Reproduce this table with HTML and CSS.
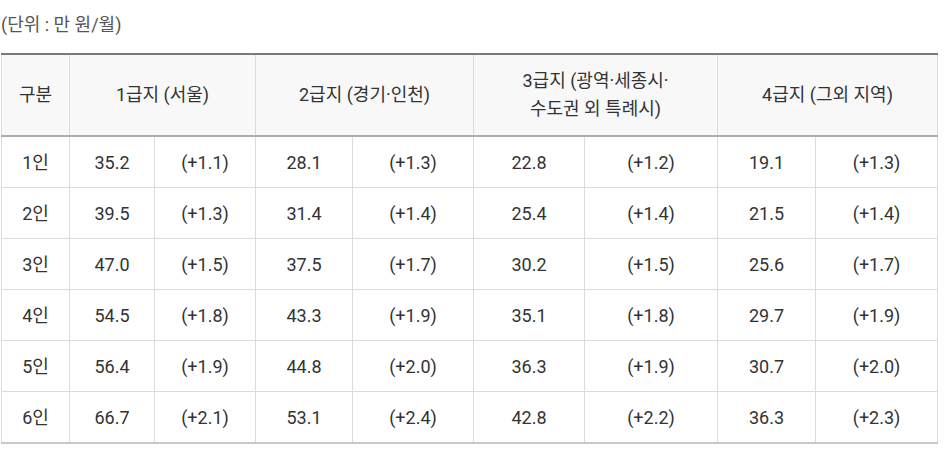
FILE: index.html
```html
<!DOCTYPE html>
<html lang="ko">
<head>
<meta charset="utf-8">
<link rel="stylesheet" href="styles.css">
</head>
<body>
<p class="unit">(단위 : 만 원/월)</p>
<table class="tbl">
  <colgroup>
    <col class="c0"><col class="c1"><col class="c2"><col class="c3"><col class="c4"><col class="c5"><col class="c6"><col class="c7"><col class="c8">
  </colgroup>
  <thead>
    <tr>
      <th>구분</th>
      <th colspan="2">1급지 (서울)</th>
      <th colspan="2">2급지 (경기·인천)</th>
      <th colspan="2">3급지 (광역·세종시·<br>수도권 외 특례시)</th>
      <th colspan="2">4급지 (그외 지역)</th>
    </tr>
  </thead>
  <tbody>
    <tr><td>1인</td><td>35.2</td><td>(+1.1)</td><td>28.1</td><td>(+1.3)</td><td>22.8</td><td>(+1.2)</td><td>19.1</td><td>(+1.3)</td></tr>
    <tr><td>2인</td><td>39.5</td><td>(+1.3)</td><td>31.4</td><td>(+1.4)</td><td>25.4</td><td>(+1.4)</td><td>21.5</td><td>(+1.4)</td></tr>
    <tr><td>3인</td><td>47.0</td><td>(+1.5)</td><td>37.5</td><td>(+1.7)</td><td>30.2</td><td>(+1.5)</td><td>25.6</td><td>(+1.7)</td></tr>
    <tr><td>4인</td><td>54.5</td><td>(+1.8)</td><td>43.3</td><td>(+1.9)</td><td>35.1</td><td>(+1.8)</td><td>29.7</td><td>(+1.9)</td></tr>
    <tr><td>5인</td><td>56.4</td><td>(+1.9)</td><td>44.8</td><td>(+2.0)</td><td>36.3</td><td>(+1.9)</td><td>30.7</td><td>(+2.0)</td></tr>
    <tr><td>6인</td><td>66.7</td><td>(+2.1)</td><td>53.1</td><td>(+2.4)</td><td>42.8</td><td>(+2.2)</td><td>36.3</td><td>(+2.3)</td></tr>
  </tbody>
</table>
</body>
</html>
```
FILE: styles.css
```css
html, body {
  margin: 0;
  padding: 0;
  background: #fff;
}
body {
  padding: 0 1px;
  font-family: Roboto, "Noto Sans CJK KR", sans-serif;
  font-size: 18px;
  color: #333;
}
.unit {
  margin: 0;
  padding-top: 11px;
  height: 42px;
  line-height: 27px;
  color: #555;
  font-size: 18px;
}
.tbl {
  border-collapse: collapse;
  table-layout: fixed;
  width: 936px;
  border-top: 2px solid #7a7a7a;
  border-bottom: 2px solid #c8c8c8;
}
.c0 { width: 68px; }
.c1 { width: 85px; }
.c2 { width: 101px; }
.c3 { width: 97px; }
.c4 { width: 121px; }
.c5 { width: 111px; }
.c6 { width: 133px; }
.c7 { width: 98px; }
.c8 { width: 122px; }
.tbl th, .tbl td {
  border-left: 1px solid #dcdcdc;
  border-right: 1px solid #dcdcdc;
  text-align: center;
  line-height: 28px;
  padding: 2px 0 0;
  font-weight: 400;
}
.tbl th {
  background: #f8f8f8;
  height: 82px;
  padding-top: 0;
  border-bottom: 2px solid #adadad;
  box-sizing: border-box;
}
.tbl td {
  height: 48px;
  border-top: 1px solid #dcdcdc;
}
.tbl tbody tr:first-child td {
  border-top: none;
}
```
